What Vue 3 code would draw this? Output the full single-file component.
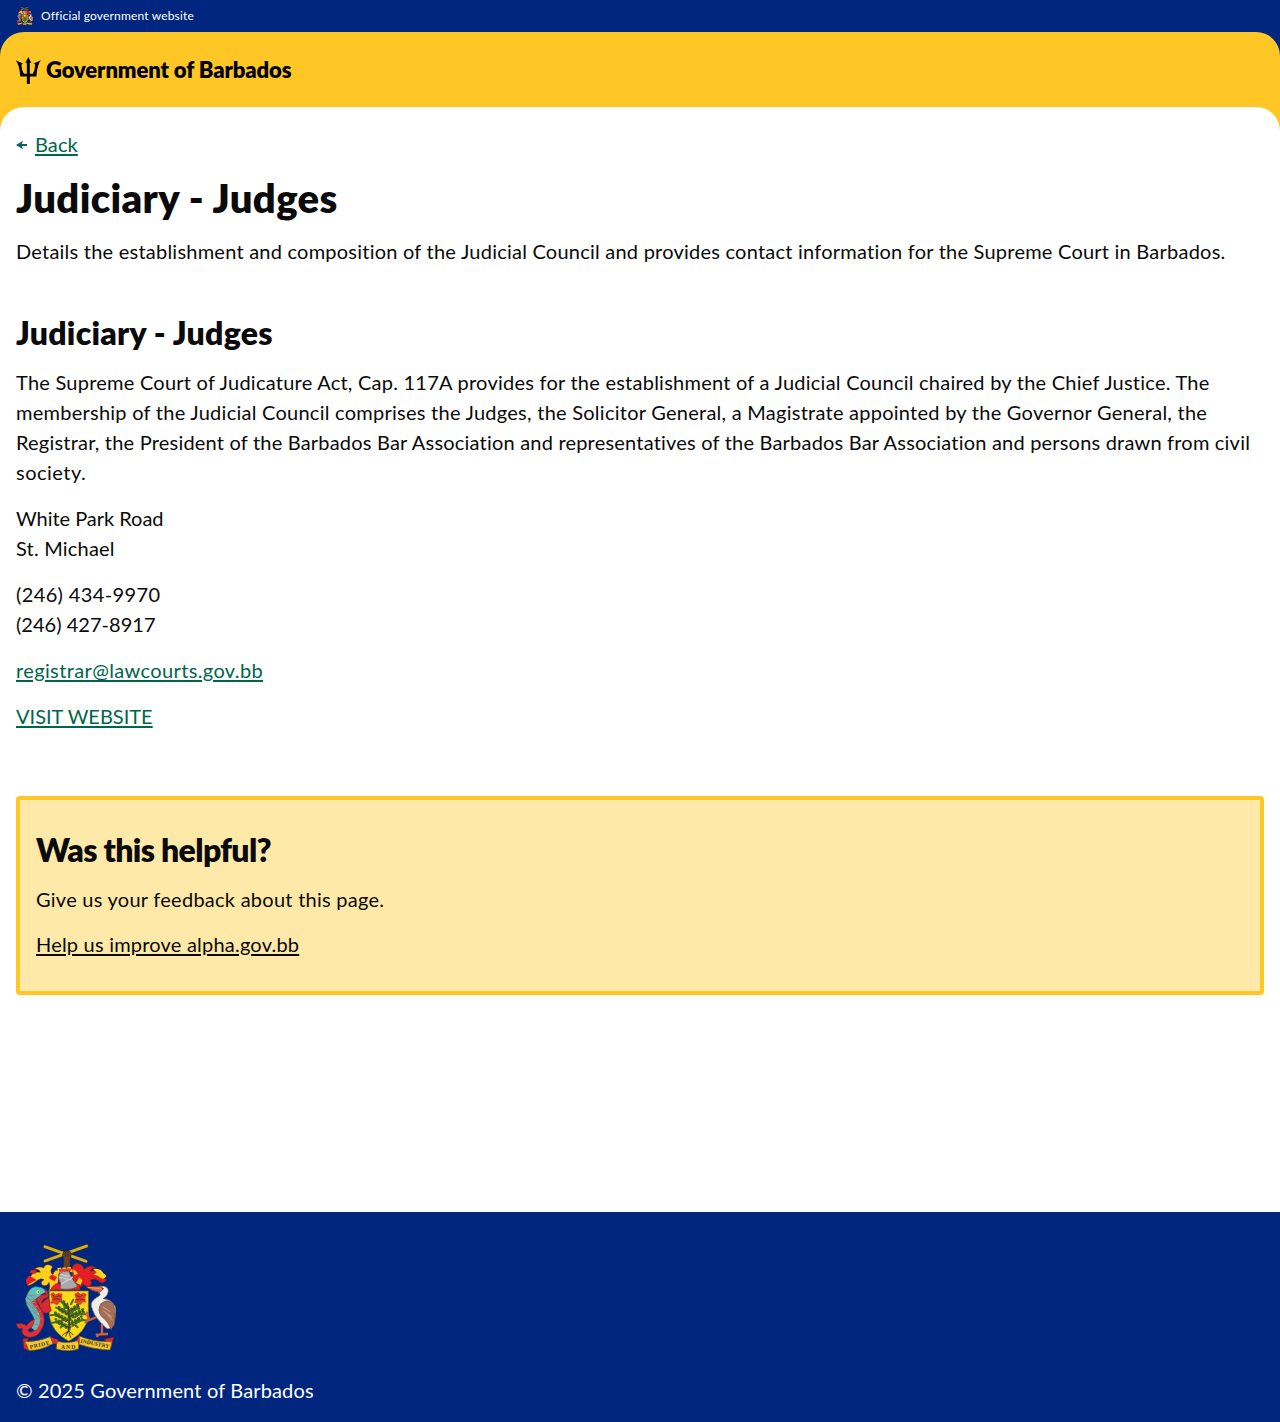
<script setup>
const details = [
  [{ text: 'The Supreme Court of Judicature Act, Cap. 117A provides for the establishment of a Judicial Council chaired by the Chief Justice. The', cls: 'a1' },
   { text: 'membership of the Judicial Council comprises the Judges, the Solicitor General, a Magistrate appointed by the Governor General, the', cls: 'a2' },
   { text: 'Registrar, the President of the Barbados Bar Association and representatives of the Barbados Bar Association and persons drawn from civil', cls: 'a3' },
   { text: 'society.', cls: 'a4' }],
  [{ text: 'White Park Road', cls: 'b1' }, { text: 'St. Michael', cls: 'b2' }],
  [{ text: '(246) 434-9970', cls: 'c1' }, { text: '(246) 427-8917', cls: 'c2' }],
]
</script>

<template>
  <div class="page">
    <svg class="defs" width="0" height="0" aria-hidden="true">
      <symbol id="crest" viewBox="48 24 300 324">
        <g stroke-linecap="round" stroke-linejoin="round">
          <path d="M135 75L260 30M135 32L258 76" stroke="#4e4310" stroke-width="11" />
          <path d="M135 75L260 30M135 32L258 76" stroke="#d9ae20" stroke-width="8" />
          <path d="M188 56q2-14 13-11q13-2 12 13l-3 15l2 27h-22l1-27z" fill="#65402a" stroke="#2b211d" stroke-width="2" />
          <path d="M197 47v15M204 48v14" stroke="#2b211d" stroke-width="1.5" />
          <path d="M178 102q-16-2-19 14q-10-6-5-17q8-8-5-12q-14-4-18 9q-16-8-27 4q14-2 17 9q-23-5-31 17q-3 15-7 24q17-6 31-18q10-7 18-1q-14 8-4 17q14 4 19-9q5 14-1 26q14-2 27-18z" fill="#ffd01c" stroke="#7a3310" stroke-width="1.5" />
          <path d="M104 101q-15 0-15 9l15 4l8-5zM89 119q-18 9-7 28q13-8 28-15zM157 116q-16 6-5 14l12 6l7-13z" fill="#e51e25" />
          <path d="M215 98q9-20 22-14q14 3 14 17q20-18 37-5q-16 0-16 10q20-7 33 8q3 14 15 17q-11 15-20 7q-14-15-29-5q8 10-2 17q-15 3-20-8q-3 15-14 10q-5-11-15-12z" fill="#e51e25" stroke="#7a3310" stroke-width="1.5" />
          <path d="M279 99q21-4 31 12l10 9q-10 13-18 5q-10-10-21-8l9-8zM238 124l9 9l-5 13l-14-4zM218 100q10 3 16 14l-11 3z" fill="#ffd01c" />
          <path d="M174 98l37-3l5 11l-39 4z" fill="#ef3027" stroke="#ffd01c" stroke-width="4" stroke-dasharray="8 7" />
          <path d="M151 162q15-27 31-17l42-4q17 3 16 20z" fill="#e62028" stroke="#84231d" stroke-width="2" />
          <path d="M177 115q8-12 30-8l9 20l17 24q-19 13-53 7l3-14q-11-13-6-29z" fill="#aaa9aa" stroke="#59595b" stroke-width="2" />
          <path d="M179 124l32 7l6-8M184 144l22-13M182 116l25 5" fill="none" stroke="#d1d0ce" stroke-width="4" />
          <path d="M148 165H265V241Q257 290 206 315Q156 289 148 240Z" fill="#ffda18" stroke="#876e1b" stroke-width="2" />
          <path d="M151 174l9-5l7 7l8-5l13 2l-3 12l4 15l-9-2l-9 10l-11-6l-8 2l4-14zM224 173l11-5l6 6l10-4l9 5l-5 11l3 14l-9-2l-8 9l-9-5l-9-1l4-13z" fill="#dd4022" />
          <path d="M159 178l8 5l10-4l6 4m-25 8l13-3l9 3m49-13l10 5l7-5m-18 14l15-3l11 3" fill="none" stroke="#8b2519" stroke-width="3" />
          <g fill="none" stroke="#3c6a28" stroke-width="8" stroke-dasharray="2 9">
            <path d="M206 275L167 253M207 269L244 245M206 255L162 231M207 243L254 221M206 235L173 214M205 229L240 204M205 219L190 198" transform="translate(0 -3)" />
            <path d="M206 275L167 253M207 269L244 245M206 255L162 231M207 243L254 221M206 235L173 214M205 229L240 204M205 219L190 198" transform="translate(2 5)" />
          </g>
          <path d="M154 261l15-3l12 5m-30-25l17-2l16 8m-16-29l12 5l7 9m-5-34l10 11l2 9m19-11l7-13m-10 42l13-14l15-1m-14 26l15-10l17 1m-26 25l14-8l14 1m-67 0l-18 5m32-12l12 9m-29-31l10-10m12 28l14-8m-36 31l-6 9m42-8l9 8" fill="none" stroke="#3f7229" stroke-width="6" />
          <path d="M205 287Q212 249 203 201M206 275L171 257M207 269L239 249M206 255L165 235M207 243L250 225M206 235L176 218M205 229L236 208M205 219L193 202" fill="none" stroke="#473b10" stroke-width="3" />
          <path d="M205 285l-17 12m17-12l-8 16m8-16l7 19m-6-19l13 11" stroke="#44340f" stroke-width="3" />
          <path d="M111 164q29-15 33 9q5 13-9 14q-10 4-10 15l17-15q12 5 7 20l5 17l-15 8q-17-4-16-14l-13-26z" fill="#d82831" stroke="#71272d" stroke-width="2" />
          <path d="M83 172Q94 147 116 153Q132 153 138 170L114 184Q98 192 108 205L129 238Q138 265 113 286L94 276Q109 257 99 241L80 207Q73 188 83 172" fill="#5bc3bd" stroke="#176265" stroke-width="2" />
          <path d="M113 186Q104 194 119 214Q144 250 123 283Q110 307 83 303Q62 297 67 276Q54 282 49 264Q66 260 80 269Q91 251 112 249Q99 261 95 274L82 282Q92 296 107 280Q122 264 109 239L86 202" fill="#e32e36" stroke="#793233" stroke-width="2" />
          <path d="M85 190Q89 206 101 220Q122 248 105 274" fill="none" stroke="#66b9b4" stroke-width="16" />
          <path d="M84 177l25 3m-28 8l25 5m-23 7l21-1m-13 16l20-4m-8 21l19-7m-16 24l21-2m-23 18l19 2" stroke="#e36567" stroke-width="2.5" />
          <path d="M82 184L104 207M91 177L113 202M83 202l27 24m-16-5l25 23M94 203l22 24" stroke="#287d81" stroke-width="1.5" />
          <circle cx="114" cy="168" r="5" fill="#eee58d" /><circle cx="115" cy="168" r="2" fill="#222" />
          <path d="M118 178l17-9l5 8z" fill="#77202a" />
          <path d="M302 150Q325 150 325 166Q322 182 309 188Q335 189 346 213Q350 232 341 263Q335 280 321 278L303 261Q280 237 274 211Q271 196 291 184Q309 174 294 169Q291 154 302 150" fill="#f3eee4" stroke="#78766f" stroke-width="2" />
          <path d="M303 203Q323 185 340 205Q349 229 343 266L333 281Q326 257 304 241Q290 222 303 203" fill="#a56e58" stroke="#674739" stroke-width="2" />
          <path d="M310 214l20 12M311 225l23 17M323 237l14 15" stroke="#d1aa90" stroke-width="3" />
          <path d="M304 151L258 152Q275 166 300 169L308 160Z" fill="#df6640" stroke="#79341f" stroke-width="2" />
          <path d="M264 154L302 158" stroke="#ffb37a" stroke-width="2" /><circle cx="309" cy="158" r="2" fill="#111" />
          <path d="M286 245L268 252L260 230M267 251l-10 8m49 7v29m-16 1l31-2M306 293l-15 7" fill="none" stroke="#d75c37" stroke-width="7" />
          <path d="M69 309L85 306L82 322L90 345L72 338ZM315 309L341 304L333 337L321 328Z" fill="#df2b2d" stroke="#742119" stroke-width="2" />
          <path d="M74 317Q113 318 151 302L159 323Q119 345 86 343L80 326ZM172 316Q205 325 238 312L235 339Q205 349 169 339ZM238 300Q278 318 326 317L336 317L330 342Q282 341 237 325Z" fill="#f4c72b" stroke="#77581b" stroke-width="2" />
          <path d="M150 303l25 8l-4 14l-12-3zM238 302l-9 10l9 12z" fill="#d72e28" />
        </g>
      </symbol>
    </svg>

    <div class="official">
      <svg class="crest-small"><use href="#crest" /></svg>
      <span class="official-text">Official government website</span>
    </div>

    <div class="header-wrap">
      <header class="header">
        <svg class="trident" viewBox="18 18 76 82" preserveAspectRatio="none" fill="#000">
          <path d="M55.500 18L65 37L60 35V69H69Q77 54 76 41L72 38L94 28L89 35Q82 51 80 77H60V100H51V77H31Q29 50 22 36L17 28L39 38L35 41Q34 57 42 69H51V35L46 37Z" />
        </svg>
        <span class="brand">Government of Barbados</span>
      </header>
    </div>

    <div class="main-wrap">
      <main class="main">
        <div class="back">
          <svg width="12" height="10" viewBox="0 0 12 10"><path d="M0 5L7 .8L5.800 4H11V6H5.800L7 9.200Z" fill="#0e5f64" /></svg>
          <a href="#">Back</a>
        </div>
        <h1>Judiciary - Judges</h1>
        <p class="lead">Details the establishment and composition of the Judicial Council and provides contact information for the Supreme Court in Barbados.</p>
        <h2>Judiciary - Judges</h2>
        <p v-for="(para, i) in details" :key="i" class="para">
          <span v-for="line in para" :key="line.cls" class="line" :class="line.cls">{{ line.text }}</span>
        </p>
        <p class="para"><a class="mail" href="#">registrar@lawcourts.gov.bb</a></p>
        <p class="para"><a class="visit" href="#">VISIT WEBSITE</a></p>

        <section class="feedback">
          <h2>Was this helpful?</h2>
          <p class="give">Give us your feedback about this page.</p>
          <p class="help"><a href="#">Help us improve alpha.gov.bb</a></p>
        </section>
      </main>
    </div>

    <footer class="footer">
      <svg class="crest-large" viewBox="48 24 300 324">
        <use href="#crest" x="48" y="24" width="300" height="324" />
        <g class="motto">
          <text transform="translate(91 339) rotate(-13)" textLength="60">PRIDE</text>
          <text x="183" y="340" textLength="43">AND</text>
          <text transform="translate(241 320) rotate(11)" textLength="88">INDUSTRY</text>
        </g>
      </svg>
      <p>© 2025 Government of Barbados</p>
    </footer>
  </div>
</template>

<style>
body { margin: 0; background: #fff; }
</style>

<style scoped>
.page { font-family: Lato, sans-serif; font-size: 20px; line-height: 30px; letter-spacing: .23px; color: #0a0a0a; min-height: 1422px; display: flex; flex-direction: column; }
.defs { position: absolute; }
h1, h2, p { margin: 0; }
.official { height: 32px; padding: 0 16px; display: flex; align-items: center; gap: 8px; background: #00267f; color: #fff; font-size: 12px; line-height: 18px; letter-spacing: .16px; }
.crest-small { width: 17px; height: 18px; }
.header-wrap { background: #00267f; }
.header { height: 75px; box-sizing: border-box; padding: 0 16px; display: flex; align-items: center; gap: 5px; background: #ffc726; border-radius: 24px 24px 0 0; }
.trident { width: 25px; height: 27px; margin-top: 1px; }
.brand { font-size: 22px; font-weight: 800; color: #000; letter-spacing: -.1px; }
.main-wrap { background: #ffc726; flex: 1; display: flex; }
.main { flex: 1; padding: 22px 16px 0; background: #fff; border-radius: 24px 24px 0 0; }
a { color: #00654a; text-decoration: underline; text-decoration-thickness: 2px; text-underline-offset: 2px; }
.back { display: flex; align-items: center; gap: 7px; letter-spacing: .1px; }
.back svg { position: relative; top: 1px; }
h1 { font-size: 40px; line-height: 46px; font-weight: 800; margin: 16px 0 15px; letter-spacing: .35px; }
h2 { font-size: 32px; line-height: 40px; font-weight: 800; letter-spacing: .25px; }
.lead { margin-bottom: 47px; }
.main > h2 { margin-bottom: 14px; }
.line { display: block; white-space: nowrap; }
.a1 { letter-spacing: .24px; }
.a2 { letter-spacing: .255px; }
.a3 { letter-spacing: .2px; }
.a4 { letter-spacing: .5px; }
.b1 { letter-spacing: -.03px; }
.b2 { letter-spacing: .2px; }
.c1, .mail { letter-spacing: .37px; }
.c2 { letter-spacing: .02px; }
.visit { letter-spacing: 0; }
.para + .para { margin-top: 16px; }
.feedback { margin-top: 65px; height: 199px; box-sizing: border-box; padding: 30px 16px 0; border: 4px solid #ffc726; border-radius: 4px; background: #ffe9a8; }
.feedback h2 { margin-bottom: 14px; letter-spacing: -.65px; }
.feedback p + p { margin-top: 15px; }
.give { letter-spacing: .26px; }
.help { letter-spacing: .21px; }
.feedback a { color: #0a0a0a; }
.footer { height: 210px; box-sizing: border-box; padding: 32px 16px 0; background: #00267f; color: #fff; letter-spacing: .15px; }
.crest-large { display: block; width: 100px; height: 108px; margin-bottom: 23px; }
.motto { font: 700 17px "Liberation Serif", serif; letter-spacing: 0; fill: #3b3516; }
</style>
